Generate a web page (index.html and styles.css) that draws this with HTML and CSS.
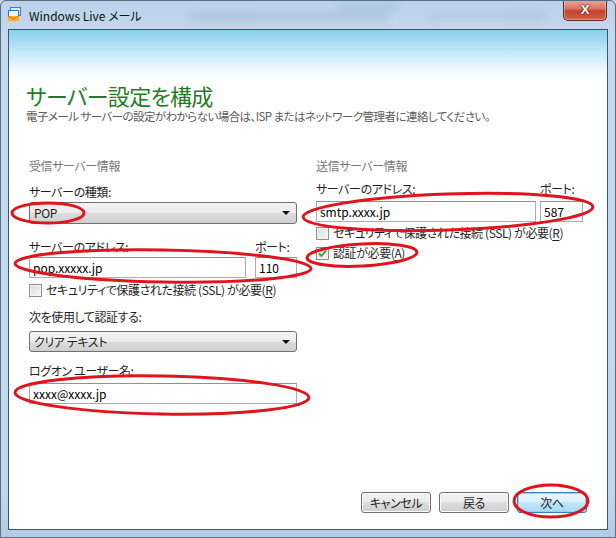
FILE: index.html
```html
<!DOCTYPE html>
<html lang="ja">
<head>
  <meta charset="UTF-8" />
  <title>Windows Live メール</title>
  <link rel="stylesheet" href="styles.css">
</head>
<body>

  <div class="window">
    <div class="titlebar">
      <span class="blur b1"></span>
      <span class="blur b2"></span>
      <span class="blur b3"></span>
      <svg class="app-icon" width="15" height="15" viewBox="0 0 15 15">
        <rect x="3.5" y="0.5" width="10" height="8" fill="#d8ecfa" stroke="#3b7cc4" />
        <rect x="1.5" y="3.5" width="10" height="8" fill="#eaf5fd" stroke="#2f6fb8" />
        <path d="M1 9 L12 9 L12 14 L1 14 Z" fill="#f3b23a" />
        <path d="M1 9 L6.5 12 L12 9" fill="none" stroke="#c9781a" />
      </svg>
      <span class="title">Windows Live メール</span>
      <div class="close">X</div>
    </div>

    <div class="client">
      <h1>サーバー設定を構成</h1>
      <p class="lead">電子メール サーバーの設定がわからない場合は、ISP またはネットワーク管理者に連絡してください。</p>

      <div class="columns">
        <!-- 受信 -->
        <div class="col col-in">
          <div class="group">受信サーバー情報</div>
          <div class="label l-type">サーバーの種類:</div>
          <div class="combo c-type">POP</div>
          <div class="pair l-addr">
            <span class="grow">サーバーのアドレス:</span>
            <span class="port">ポート:</span>
          </div>
          <div class="pair f-addr">
            <div class="textbox grow">pop.xxxxx.jp</div>
            <div class="textbox port">110</div>
          </div>
          <div class="check c-ssl">
            <span class="box"></span>
            <span>セキュリティで保護された接続 (SSL) が必要(<u>R</u>)</span>
          </div>
          <div class="label l-auth">次を使用して認証する:</div>
          <div class="combo c-auth">クリア テキスト</div>
          <div class="label l-user">ログオン ユーザー名:</div>
          <div class="textbox f-user">xxxx@xxxx.jp</div>
        </div>

        <!-- 送信 -->
        <div class="col col-out">
          <div class="group">送信サーバー情報</div>
          <div class="pair l-smtp">
            <span class="grow">サーバーのアドレス:</span>
            <span class="port">ポート:</span>
          </div>
          <div class="pair f-smtp">
            <div class="textbox grow">smtp.xxxx.jp</div>
            <div class="textbox port">587</div>
          </div>
          <div class="check c-ssl2">
            <span class="box"></span>
            <span>セキュリティで保護された接続 (SSL) が必要(<u>R</u>)</span>
          </div>
          <div class="check c-req">
            <span class="box">
              <svg width="9" height="9" viewBox="0 0 9 9">
                <path d="M1 4.5 L3.5 7 L8 1.5" fill="none" stroke="#3f9a3a" stroke-width="1.8" />
              </svg>
            </span>
            <span>認証が必要(<u>A</u>)</span>
          </div>
        </div>
      </div>

      <div class="buttons">
        <div class="btn">キャンセル</div>
        <div class="btn">戻る</div>
        <div class="btn default">次へ</div>
      </div>
    </div>

    <!-- red hand-drawn marks -->
    <svg class="marks" width="616" height="538" viewBox="0 0 616 538">
      <g fill="none" stroke="#e0141c" stroke-width="3">
        <ellipse cx="48" cy="213" rx="36" ry="10" />
        <ellipse cx="163" cy="266" rx="148" ry="16" transform="rotate(1 163 266)" />
        <ellipse cx="448" cy="212" rx="145" ry="18" transform="rotate(-2 448 212)" />
        <ellipse cx="362" cy="255" rx="55" ry="11" transform="rotate(-3 362 255)" />
        <ellipse cx="162" cy="395" rx="147" ry="19" transform="rotate(1 162 395)" />
        <ellipse cx="551" cy="501" rx="37" ry="16" />
      </g>
    </svg>
  </div>

</body>
</html>
```

FILE: styles.css
```css
* {
  box-sizing: border-box;
  margin: 0;
  padding: 0;
}

body {
  font-family: "Noto Sans CJK JP", "Liberation Sans", sans-serif;
  font-size: 12px;
  font-feature-settings: "palt";
  letter-spacing: -0.4px;
  color: #1e1e1e;
  background: #c6d9ee;
}

.window {
  position: relative;
  width: 616px;
  height: 538px;
  padding: 0 7px 7px;
  border: 1px solid #5b6d80;
  border-radius: 6px 6px 0 0;
  background: linear-gradient(to bottom, #bcd2ea 0, #c5d9ee 40px, #c4d8ed 490px, #b1cbe6 100%);
  overflow: hidden;
}

/* title bar */
.titlebar {
  position: relative;
  height: 28px;
  display: flex;
  align-items: flex-start;
}

.blur {
  position: absolute;
  background: #8ea8c6;
  filter: blur(4px);
  opacity: 0.45;
  border-radius: 3px;
}

.b1 { left: 180px; top: 12px; width: 200px; height: 7px; }
.b2 { left: 330px; top: 3px; width: 60px; height: 6px; }
.b3 { left: 420px; top: 12px; width: 120px; height: 6px; opacity: 0.3; }

.app-icon {
  position: relative;
  margin: 6px 0 0 -1px;
}

.title {
  position: relative;
  margin: 7px 0 0 7px;
  font-size: 12px;
  line-height: 16px;
  letter-spacing: 0;
  color: #111;
}

.close {
  position: relative;
  margin: -1px 1px 0 auto;
  width: 44px;
  height: 21px;
  border: 1px solid #5c2a24;
  border-top: none;
  border-radius: 0 0 5px 5px;
  background: linear-gradient(to bottom, #e9aa9d 0, #d8705e 45%, #c2402b 55%, #d4644a 100%);
  box-shadow: inset 0 0 0 1px rgba(255, 255, 255, 0.35);
  color: #fff;
  font-family: "Liberation Sans", sans-serif;
  font-weight: bold;
  font-size: 13px;
  line-height: 20px;
  text-align: center;
  text-shadow: 0 0 2px #4a1a14, 0 0 1px #4a1a14;
}

/* client area */
.client {
  display: flex;
  flex-direction: column;
  height: 501px;
  padding: 51px 24px 16px 17px;
  border: 1px solid #3f546b;
  background: linear-gradient(to bottom, #88ceec 0, #c3e8f7 22px, #f4fbfe 42px, #fff 52px);
}

h1 {
  font-size: 22px;
  line-height: 28px;
  font-weight: normal;
  letter-spacing: -0.7px;
  color: #1f7d25;
}

.lead {
  font-size: 11.5px;
  line-height: 14px;
  letter-spacing: -0.55px;
  color: #5a5a5a;
}

.columns {
  display: flex;
  gap: 19px;
  margin: 35px 0 0 3px;
}

.col-in {
  width: 268px;
}

.col-out {
  width: 267px;
}

.group {
  line-height: 16px;
  color: #777;
}

.label {
  line-height: 16px;
}

.pair {
  display: flex;
  line-height: 16px;
}

.col-in .pair { gap: 9px; }
.col-out .pair { gap: 4px; }

.grow {
  flex: 1;
}

.col-in .port { width: 42px; }
.col-out .port { width: 43px; }

.combo {
  position: relative;
  height: 22px;
  padding-left: 4px;
  border: 1px solid #707070;
  border-radius: 3px;
  background: linear-gradient(to bottom, #f3f3f3 0, #ebebeb 50%, #dddddd 50%, #cfcfcf 100%);
  line-height: 20px;
}

.combo::after {
  content: "";
  position: absolute;
  right: 6px;
  top: 8px;
  border-left: 4px solid transparent;
  border-right: 4px solid transparent;
  border-top: 4px solid #111;
}

.textbox {
  height: 21px;
  padding-left: 3px;
  border: 1px solid #abadb3;
  border-top-color: #8f9196;
  background: #fff;
  line-height: 19px;
  letter-spacing: 0;
  color: #000;
}

.check {
  display: flex;
  align-items: center;
  gap: 4px;
  line-height: 16px;
  white-space: nowrap;
}

.check u {
  text-underline-offset: 2px;
}

.box {
  display: flex;
  align-items: center;
  justify-content: center;
  width: 13px;
  height: 13px;
  border: 1px solid #8e8f8f;
  background: linear-gradient(135deg, #dcdcdc 0, #f7f7f7 100%);
  box-shadow: inset 0 0 0 1px #f4f4f4;
}

/* vertical rhythm, taken from the dialog */
.l-type { margin-top: 10px; }
.c-type { margin-top: 2px; }
.l-addr { margin-top: 15px; }
.f-addr { margin-top: 2px; }
.c-ssl { margin-top: 4px; }
.l-auth { margin-top: 11px; }
.c-auth { margin-top: 6px; height: 21px; }
.l-user { margin-top: 11px; }
.f-user { margin-top: 4px; }

.l-smtp { margin-top: 7px; }
.f-smtp { margin-top: 4px; }
.c-ssl2 { margin-top: 3px; }
.c-req { margin-top: 4px; }

/* buttons */
.buttons {
  display: flex;
  justify-content: flex-end;
  gap: 8px;
  margin: auto -4px 0 0;
}

.btn {
  width: 70px;
  height: 21px;
  border: 1px solid #707070;
  border-radius: 3px;
  background: linear-gradient(to bottom, #f2f2f2 0, #ebebeb 50%, #dddddd 50%, #cfcfcf 100%);
  box-shadow: inset 0 0 0 1px #fbfbfb;
  text-align: center;
  line-height: 19px;
}

.btn.default {
  border-color: #3c7fb1;
  background: linear-gradient(to bottom, #eaf6fd 0, #d9f0fc 50%, #bee6fd 50%, #a7d9f5 100%);
  box-shadow: inset 0 0 0 1px #98d1ef;
}

.marks {
  position: absolute;
  left: -1px;
  top: -1px;
  pointer-events: none;
}
```
